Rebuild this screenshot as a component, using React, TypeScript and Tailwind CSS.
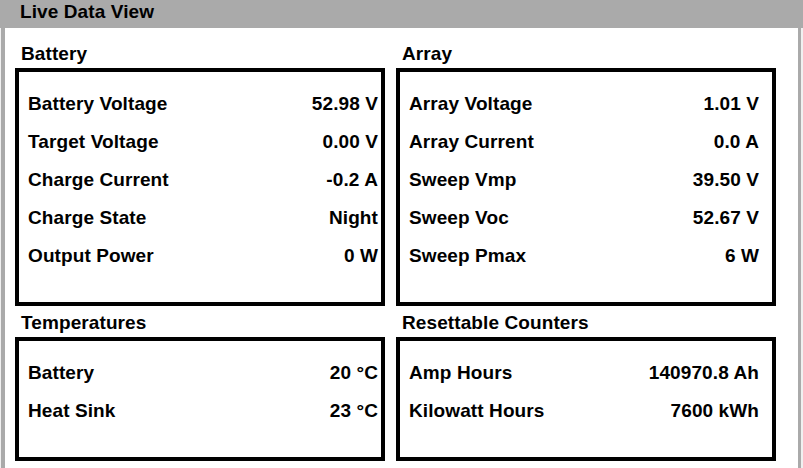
import React from "react";

type Row = { label: string; value: string };

const battery: Row[] = [
    { label: "Battery Voltage", value: "52.98 V" },
    { label: "Target Voltage", value: "0.00 V" },
    { label: "Charge Current", value: "-0.2 A" },
    { label: "Charge State", value: "Night" },
    { label: "Output Power", value: "0 W" },
];

const array: Row[] = [
    { label: "Array Voltage", value: "1.01 V" },
    { label: "Array Current", value: "0.0 A" },
    { label: "Sweep Vmp", value: "39.50 V" },
    { label: "Sweep Voc", value: "52.67 V" },
    { label: "Sweep Pmax", value: "6 W" },
];

const temps: Row[] = [
    { label: "Battery", value: "20 °C" },
    { label: "Heat Sink", value: "23 °C" },
];

const counters: Row[] = [
    { label: "Amp Hours", value: "140970.8 Ah" },
    { label: "Kilowatt Hours", value: "7600 kWh" },
];

function Section({ title, rows, className }: { title: string; rows: Row[]; className?: string }) {
    return (
        <div className={className}>
            <div className="h-[26px] pl-[6px] leading-[24px]">{title}</div>
            <div className="border-4 border-black pt-[13px] pb-[27px] pl-[9px]">
                {rows.map((r) => (
                    <div key={r.label} className="w-[350px] flex justify-between leading-[38px] h-[38px]">
                        <span>{r.label}</span>
                        <span>{r.value}</span>
                    </div>
                ))}
            </div>
        </div>
    );
}

export default function App() {
    return (
        <div className="w-[803px] h-[468px] overflow-hidden bg-[#f0f0f0] font-['Liberation_Sans',Arial,sans-serif] font-bold text-[19px] tracking-[0.1px] text-black">
            <div className="h-[28px] bg-[#aaaaaa] pl-[20px] leading-[24px]">Live Data View</div>
            <div className="ml-[1px] w-[800px] h-[440px] bg-white border-l-4 border-r-[3px] border-[#aaaaaa] pl-[10px] pt-[14px] flex gap-[11px]">
                <div className="w-[370px] shrink-0">
                    <Section title="Battery" rows={battery} />
                    <Section title="Temperatures" rows={temps} className="mt-[5px]" />
                </div>
                <div className="w-[380px] shrink-0">
                    <Section title="Array" rows={array} />
                    <Section title="Resettable Counters" rows={counters} className="mt-[5px]" />
                </div>
            </div>
        </div>
    );
}
